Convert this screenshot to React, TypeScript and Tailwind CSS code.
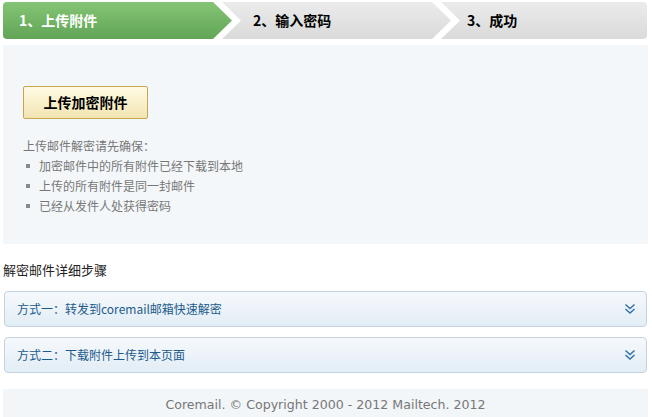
import React from "react";

const cjk = { fontFamily: '"Noto Sans CJK SC", "Liberation Sans", sans-serif' };

function DoubleChevron() {
  return (
    <svg width="12" height="12" viewBox="0 0 12 12" fill="none" stroke="#2f6fa8" strokeWidth="1.4">
      <polyline points="1.5,1.5 6,5.5 10.5,1.5" />
      <polyline points="1.5,6 6,10 10.5,6" />
    </svg>
  );
}

export default function App() {
  const items = ["加密邮件中的所有附件已经下载到本地", "上传的所有附件是同一封邮件", "已经从发件人处获得密码"];
  return (
    <div className="w-[652px] h-[417px] bg-white px-[3px] pt-[2px] overflow-hidden" style={cjk}>
      {/* steps */}
      <div className="flex h-[37px] w-[644px]">
        <div className="w-[229px] h-full rounded-l-[4px] bg-gradient-to-b from-[#84c475] to-[#62a556] [clip-path:polygon(0_0,calc(100%-19px)_0,100%_50%,calc(100%-19px)_100%,0_100%)] flex items-center pl-[16px]">
          <span className="text-white font-bold text-[14px]">1、上传附件</span>
        </div>
        <div className="ml-[-10px] w-[229px] h-full bg-gradient-to-b from-[#ebebeb] to-[#dadada] [clip-path:polygon(0_0,calc(100%-19px)_0,100%_50%,calc(100%-19px)_100%,0_100%,19px_50%)] flex items-center pl-[31px]">
          <span className="text-black font-bold text-[14px]">2、输入密码</span>
        </div>
        <div className="ml-[-10px] flex-1 h-full rounded-r-[4px] bg-gradient-to-b from-[#ebebeb] to-[#dadada] [clip-path:polygon(0_0,100%_0,100%_100%,0_100%,19px_50%)] flex items-center pl-[26px]">
          <span className="text-black font-bold text-[14px]">3、成功</span>
        </div>
      </div>

      {/* panel */}
      <div className="mt-[6px] h-[199px] w-[645px] bg-[#f4f7fa] pt-[41px] pl-[20px]">
        <button className="w-[125px] h-[33px] rounded-[2px] border border-[#c8a54e] bg-gradient-to-b from-[#fffbe4] to-[#f2e4b2] text-black font-bold text-[14px] flex items-center justify-center">
          上传加密附件
        </button>
        <div className="mt-[17px] text-[12px] leading-[20px] text-[#777]">上传邮件解密请先确保：</div>
        <ul className="text-[12px] leading-[20px] text-[#777]">
          {items.map((t) => (
            <li key={t} className="flex items-center">
              <span className="ml-[3px] mr-[9px] w-[4px] h-[4px] bg-[#8a8a8a]" />
              {t}
            </li>
          ))}
        </ul>
      </div>

      <div className="mt-[17px] text-[13px] leading-[18px] text-[#222]">解密邮件详细步骤</div>

      <div className="mt-[12px] ml-[1px] w-[643px] h-[36px] rounded-[4px] border border-[#c4d3df] bg-gradient-to-b from-[#f6f9fc] to-[#e2edf5] flex items-center justify-between pl-[12px] pr-[10px]">
        <span className="text-[12px] text-[#1c5a8c]">方式一：转发到coremail邮箱快速解密</span>
        <DoubleChevron />
      </div>
      <div className="mt-[10px] ml-[1px] w-[643px] h-[36px] rounded-[4px] border border-[#c4d3df] bg-gradient-to-b from-[#f6f9fc] to-[#e2edf5] flex items-center justify-between pl-[12px] pr-[10px]">
        <span className="text-[12px] text-[#1c5a8c]">方式二：下载附件上传到本页面</span>
        <DoubleChevron />
      </div>

      <div className="mt-[16px] w-[645px] h-[28px] bg-[#f3f6f9] flex items-center justify-center pt-[4px] text-[12.6px] text-[#777]" style={{ fontFamily: '"DejaVu Sans", Verdana, sans-serif' }}>
        Coremail. © Copyright 2000 - 2012 Mailtech. 2012
      </div>
    </div>
  );
}
